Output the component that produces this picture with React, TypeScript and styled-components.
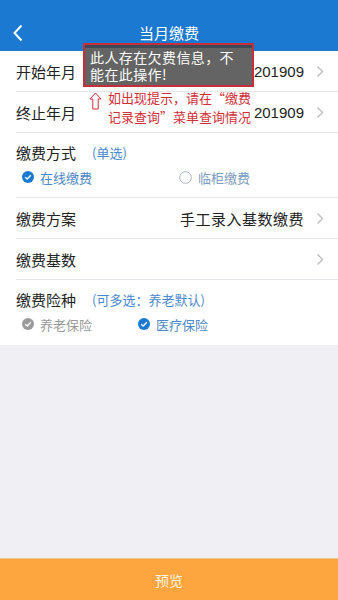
import React from "react";
import styled, { createGlobalStyle } from "styled-components";

const Global = createGlobalStyle`
  html, body { margin: 0; padding: 0; height: 100%; }
  body { font-family: "Noto Sans CJK SC", "Noto Sans", sans-serif; background: #efeff4; }
  #root { height: 100%; }
`;

const Page = styled.div`
  position: relative;
  width: 338px;
  height: 600px;
  display: flex;
  flex-direction: column;
  background: #efeff4;
  overflow: hidden;
`;

const Header = styled.div`
  height: 51px;
  background: #1b79d1;
  display: flex;
  align-items: flex-end;
  justify-content: center;
  position: relative;
  padding-bottom: 8px;
  box-sizing: border-box;
`;

const Title = styled.div`
  color: #fff;
  font-size: 15px;
  line-height: 20px;
`;

const Back = styled.div`
  position: absolute;
  left: 12px;
  bottom: 9px;
  width: 12px;
  height: 18px;
  display: flex;
`;

const Form = styled.div`
  background: #fff;
  display: flex;
  flex-direction: column;
`;

const Row = styled.div`
  height: 41px;
  margin-left: 16px;
  padding-right: 14px;
  display: flex;
  align-items: center;
  border-bottom: 1px solid #e6e6ea;
  box-sizing: border-box;
`;

const Label = styled.div<{ $fixed?: boolean }>`
  font-size: 15px;
  color: #222;
  flex: ${(p) => (p.$fixed ? "none" : "1")};
`;

const Value = styled.div`
  font-size: 15px;
  color: #222;
  margin-right: 12px;
  font-family: "Liberation Sans", "Noto Sans CJK SC", sans-serif;
`;

const ValueCn = styled(Value)`
  font-family: "Noto Sans CJK SC", sans-serif;
  letter-spacing: 0.5px;
`;

const Section = styled.div<{ $last?: boolean }>`
  margin-left: 16px;
  height: 65px;
  display: flex;
  flex-direction: column;
  border-bottom: ${(p) => (p.$last ? "none" : "1px solid #e6e6ea")};
  box-sizing: border-box;
  padding-top: 8px;
`;

const SectionTitle = styled.div`
  display: flex;
  align-items: center;
  height: 22px;
`;

const Hint = styled.span`
  font-size: 13px;
  color: #4a8ad0;
  margin-left: 16px;
`;

const Options = styled.div`
  display: flex;
  align-items: center;
  margin-top: 4px;
  padding-left: 6px;
  height: 20px;
`;

const Option = styled.div<{ $w: number; $color: string }>`
  width: ${(p) => p.$w}px;
  display: flex;
  align-items: center;
  gap: 6px;
  font-size: 13px;
  color: ${(p) => p.$color};
`;

const Gray = styled.div`
  flex: 1;
`;

const Footer = styled.div`
  height: 41px;
  background: #fda53f;
  border-top: 1px solid #f6c690;
  display: flex;
  align-items: center;
  justify-content: center;
  color: #fff3df;
  font-size: 14px;
`;

const Toast = styled.div`
  position: absolute;
  left: 83px;
  top: 43px;
  width: 171px;
  height: 44px;
  box-sizing: border-box;
  border: 2px solid #c52f3b;
  background: #646464;
  color: #fff;
  font-size: 14px;
  line-height: 17px;
  padding: 4px 5px 0 5px;
  letter-spacing: 0.4px;
  box-shadow: inset 0 3px 0 #3e4a56;
`;

const Note = styled.div`
  position: absolute;
  left: 89px;
  top: 88px;
  display: flex;
  gap: 6px;
`;

const NoteText = styled.div`
  color: #d0303a;
  font-size: 13px;
  line-height: 19px;
`;

const Chevron = () => (
  <svg width="8" height="13" viewBox="0 0 8 13">
    <path d="M1.5 1.5 L6.5 6.5 L1.5 11.5" fill="none" stroke="#c2c2c6" strokeWidth="1.5" />
  </svg>
);

const CheckCircle = ({ color }: { color: string }) => (
  <svg width="12" height="12" viewBox="0 0 12 12">
    <circle cx="6" cy="6" r="6" fill={color} />
    <path d="M3.2 6.2 L5.2 8 L8.8 4.2" fill="none" stroke="#fff" strokeWidth="1.4" />
  </svg>
);

const EmptyCircle = () => (
  <svg width="13" height="13" viewBox="0 0 13 13">
    <circle cx="6.5" cy="6.5" r="5.8" fill="none" stroke="#a9b4c0" strokeWidth="1" />
  </svg>
);

export default function App() {
  return (
    <Page>
      <Global />
      <Header>
        <Back>
          <svg width="12" height="18" viewBox="0 0 12 18">
            <path d="M9.5 1.5 L2.5 9 L9.5 16.5" fill="none" stroke="#fff" strokeWidth="2" />
          </svg>
        </Back>
        <Title>当月缴费</Title>
      </Header>
      <Form>
        <Row>
          <Label>开始年月</Label>
          <Value>201909</Value>
          <Chevron />
        </Row>
        <Row>
          <Label>终止年月</Label>
          <Value>201909</Value>
          <Chevron />
        </Row>
        <Section>
          <SectionTitle>
            <Label $fixed>缴费方式</Label>
            <Hint>(单选)</Hint>
          </SectionTitle>
          <Options>
            <Option $w={157} $color="#4f88c6">
              <CheckCircle color="#1b79d1" />
              在线缴费
            </Option>
            <Option $w={120} $color="#7d9cc0">
              <EmptyCircle />
              临柜缴费
            </Option>
          </Options>
        </Section>
        <Row>
          <Label>缴费方案</Label>
          <ValueCn>手工录入基数缴费</ValueCn>
          <Chevron />
        </Row>
        <Row>
          <Label>缴费基数</Label>
          <Chevron />
        </Row>
        <Section $last>
          <SectionTitle>
            <Label $fixed>缴费险种</Label>
            <Hint>(可多选：养老默认)</Hint>
          </SectionTitle>
          <Options>
            <Option $w={116} $color="#999">
              <CheckCircle color="#9a9a9a" />
              养老保险
            </Option>
            <Option $w={120} $color="#4f88c6">
              <CheckCircle color="#1b79d1" />
              医疗保险
            </Option>
          </Options>
        </Section>
      </Form>
      <Gray />
      <Footer>预览</Footer>
      <Toast>
        此人存在欠费信息，不
        <br />
        能在此操作!
      </Toast>
      <Note>
        <svg width="13" height="22" viewBox="0 0 13 22">
          <path d="M6.5 5 L12 11 L9.2 11 L9.2 21 L3.8 21 L3.8 11 L1 11 Z" fill="none" stroke="#d0303a" strokeWidth="1" />
        </svg>
        <NoteText>
          如出现提示，请在“缴费
          <br />
          记录查询”菜单查询情况
        </NoteText>
      </Note>
    </Page>
  );
}
